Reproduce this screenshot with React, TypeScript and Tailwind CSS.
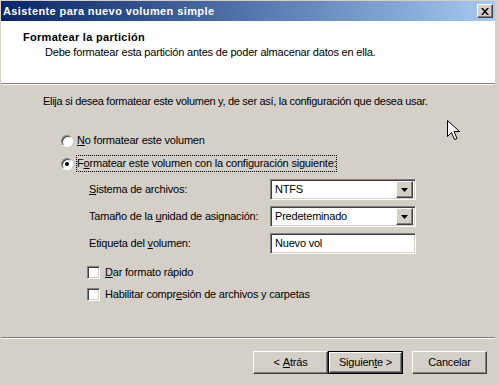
import React from 'react';

const sunken =
  'border border-t-[#808080] border-l-[#808080] border-b-white border-r-white shadow-[inset_1px_1px_0_#404040,inset_-1px_-1px_0_#d4d0c8] bg-white';
const raised =
  'border border-t-white border-l-white border-b-[#404040] border-r-[#404040] shadow-[inset_-1px_-1px_0_#808080] bg-[#d4d0c8]';

const Radio = ({ checked }: { checked?: boolean }) => (
  <span className="relative w-[12px] h-[12px] rounded-full border border-t-[#808080] border-l-[#808080] border-b-white border-r-white bg-white shadow-[inset_1px_1px_0_#404040] flex items-center justify-center">
    {checked && <span className="w-[4px] h-[4px] rounded-full bg-black" />}
  </span>
);

const Checkbox = () => <span className={`w-[13px] h-[13px] ${sunken}`} />;

const Combo = ({ value }: { value: string }) => (
  <div className={`flex items-center w-[146px] h-[21px] p-[2px] ${sunken}`}>
    <span className="flex-1 pl-[2px]">{value}</span>
    <span className={`w-[17px] h-[17px] flex items-center justify-center ${raised}`}>
      <svg width="7" height="4" viewBox="0 0 7 4">
        <path d="M0 0h7L3.5 4z" fill="#000" />
      </svg>
    </span>
  </div>
);

const Button = ({ children, isDefault }: { children: React.ReactNode; isDefault?: boolean }) => (
  <div className={`w-[75px] h-[23px] ${isDefault ? 'border border-black' : ''}`}>
    <div className={`w-full h-full flex items-center justify-center ${raised}`}>{children}</div>
  </div>
);

export default function App() {
  return (
    <div className="relative w-[499px] h-[385px] overflow-hidden bg-[#d4d0c8] pl-px pr-[4px] pt-px flex flex-col text-black text-[11px] leading-[13px] tracking-[-0.2px] font-['Liberation_Sans',Arial,sans-serif]">
      {/* caption */}
      <div className="h-[20px] flex items-center justify-between pl-[2px] pr-[2px] bg-gradient-to-r from-[#0a246a] to-[#a6caf0]">
        <span className="text-white font-bold tracking-[0.4px]">Asistente para nuevo volumen simple</span>
        <div className={`w-[16px] h-[14px] flex items-center justify-center ${raised}`}>
          <svg width="8" height="7" viewBox="0 0 8 7">
            <path d="M0 0h2l2 2.5L6 0h2L5 3.5 8 7H6L4 4.5 2 7H0l3-3.5z" fill="#000" />
          </svg>
        </div>
      </div>

      {/* header */}
      <div className="h-[63px] bg-white border-b border-[#808080] shadow-[0_1px_0_#fff] pl-[22px] pt-[10px]">
        <div className="font-bold tracking-[0.3px]">Formatear la partición</div>
        <div className="mt-[2px] ml-[22px]">Debe formatear esta partición antes de poder almacenar datos en ella.</div>
      </div>

      {/* body */}
      <div className="flex-1 flex flex-col pl-[41px] pt-[11px]">
        <p className="ml-[1px] tracking-[-0.3px]">
          Elija si desea formatear este volumen y, de ser así, la configuración que desea usar.
        </p>

        <div className="ml-[19px] mt-[24px] h-[17px] flex items-center gap-[3px]">
          <Radio />
          <span className="border border-transparent">
            <span className="underline">N</span>o formatear este volumen
          </span>
        </div>
        <div className="ml-[19px] mt-[6px] h-[17px] flex items-center gap-[3px]">
          <Radio checked />
          <span className="border border-dotted border-black h-[17px] flex items-center">
            F<span className="underline">o</span>rmatear este volumen con la configuración siguiente:
          </span>
        </div>

        <div className="ml-[47px] mt-[7px] grid grid-cols-[181px_146px] gap-y-[6px] items-center">
          <span>
            <span className="underline">S</span>istema de archivos:
          </span>
          <Combo value="NTFS" />
          <span>
            Tamaño de la <span className="underline">u</span>nidad de asignación:
          </span>
          <Combo value="Predeteminado" />
          <span>
            Etiqueta del <span className="underline">v</span>olumen:
          </span>
          <div className={`w-[146px] h-[21px] flex items-center pl-[4px] ${sunken}`}>Nuevo vol</div>
        </div>

        <div className="ml-[45px] mt-[10px] h-[17px] flex items-center gap-[5px]">
          <Checkbox />
          <span>
            <span className="underline">D</span>ar formato rápido
          </span>
        </div>
        <div className="ml-[45px] mt-[5px] h-[17px] flex items-center gap-[5px]">
          <Checkbox />
          <span>
            Habilitar compr<span className="underline">e</span>sión de archivos y carpetas
          </span>
        </div>
      </div>

      {/* footer */}
      <div className="h-[48px] border-t border-[#808080]">
        <div className="h-full border-t border-white flex justify-end items-start pt-[12px] pr-[8px]">
          <Button>
            &lt; <span className="underline ml-[3px]">A</span>trás
          </Button>
          <Button isDefault>
            Siguien<span className="underline">t</span>e &gt;
          </Button>
          <div className="w-[9px]" />
          <Button>Cancelar</Button>
        </div>
      </div>

      {/* mouse pointer */}
      <svg className="absolute left-[447px] top-[120px]" width="13" height="21" viewBox="0 0 13 21">
        <path d="M0.5 0.5v16l4-4 3 7 2.5-1-3-7h5.5z" fill="#fff" stroke="#000" strokeWidth="1" />
      </svg>
    </div>
  );
}
